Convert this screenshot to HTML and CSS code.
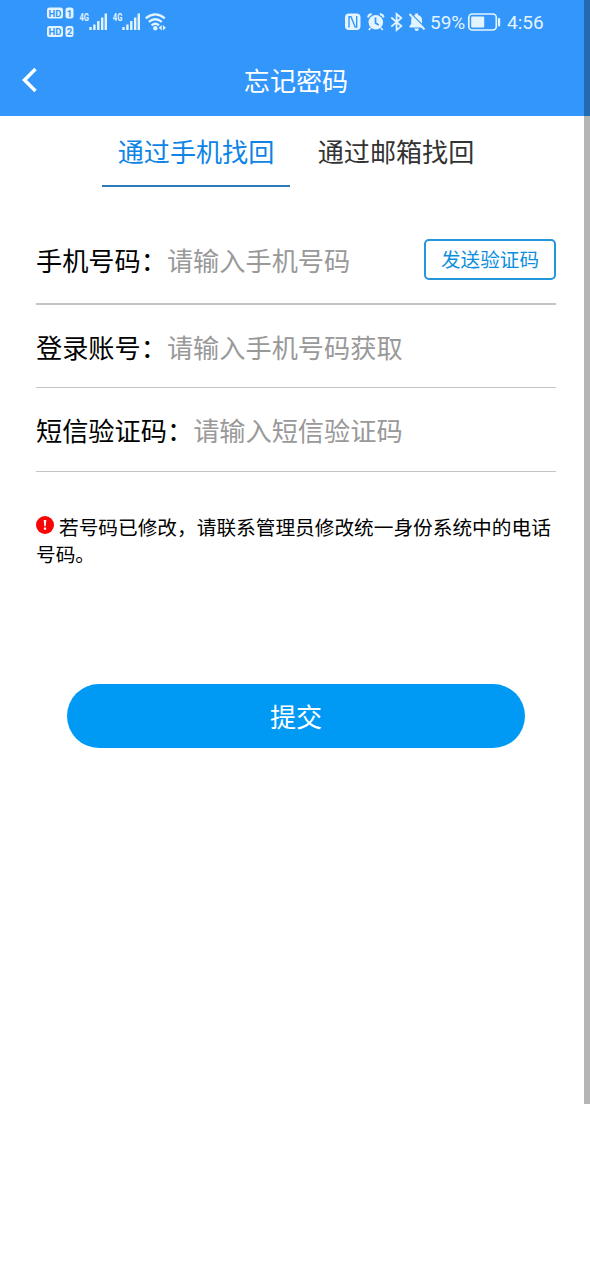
FILE: index.html
```html
<!DOCTYPE html>
<html lang="zh-CN">
<head>
<meta charset="utf-8">
<title>忘记密码</title>
<link rel="stylesheet" href="styles.css">
</head>
<body>
<div class="screen">
  <header class="header">
    <div class="status">
      <svg class="status-left" width="122" height="34" viewBox="46 5 122 34">
        <g fill="#e3f4ff">
          <rect x="47" y="7.500" width="16" height="11" rx="2.500"/>
          <rect x="65.500" y="7.500" width="8" height="11" rx="2.500"/>
          <rect x="47" y="26" width="16" height="11" rx="2.500"/>
          <rect x="65.500" y="26" width="8" height="11" rx="2.500"/>
          <path d="M89.300 27h2.400v3h-2.400zM93.200 24.500h2.400v5.500h-2.400zM97.100 21h2.400v9h-2.400zM101 17.500h2.400v12.500h-2.400zM104.600 13.500h2.400v16.500h-2.400z"/>
          <path d="M122.300 27h2.400v3h-2.400zM126.200 24.500h2.400v5.500h-2.400zM130.100 21h2.400v9h-2.400zM134 17.500h2.400v12.500h-2.400zM137.600 13.500h2.400v16.500h-2.400z"/>
          <circle cx="155.300" cy="28.300" r="2.200"/>
          <path d="M161.700 25v5.400l-3-2.700zM162.900 25v5.400l3-2.700z"/>
        </g>
        <g class="badge-text">
          <text x="55" y="16.500">HD</text><text x="69.500" y="16.500">1</text>
          <text x="55" y="35">HD</text><text x="69.500" y="35">2</text>
        </g>
        <g class="net-text"><text x="79.500" y="21" textLength="9.500" lengthAdjust="spacingAndGlyphs">4G</text><text x="112.800" y="21" textLength="9.500" lengthAdjust="spacingAndGlyphs">4G</text></g>
        <g fill="none" stroke="#e3f4ff" stroke-width="2.300">
          <path d="M145.800 18.300q9.500-7.800 19 0M148.800 21.900q6.500-5.200 13 0M151.600 25.300q3.700-3 7.400 0"/>
        </g>
      </svg>
      <svg class="status-right" width="84" height="22" viewBox="343 12 84 22">
        <rect x="345" y="13.500" width="15.500" height="16.500" rx="4" fill="#e3f4ff"/>
        <path d="M349 27.500V16.800h2l4.200 10.200h1.500V16" fill="none" stroke="#3396fb" stroke-width="1.400"/>
        <circle cx="375.800" cy="22.300" r="7.300" fill="#e3f4ff"/>
        <path d="M375.500 17.500v5.500l3.300 2" fill="none" stroke="#3396fb" stroke-width="1.700"/>
        <path d="M368 17.500q.5-3 3.700-3.500M383.600 17.500q-.5-3-3.700-3.500M370.500 28l-1.600 2M381 28l1.700 2" fill="none" stroke="#e3f4ff" stroke-width="1.800"/>
        <path d="M391.300 17.500l10 8.600-4.700 4V14l4.700 4-10 8.600" fill="none" stroke="#e3f4ff" stroke-width="1.800"/>
        <path d="M409.500 27.500v-1.500l1.700-2v-4q0-4 4-5v-1.500h2.800v1.500q4 1 4 5v4l1.900 2v1.500zM414.300 28.500h4.700q-.5 2.500-2.300 2.500t-2.400-2.500z" fill="#e3f4ff"/>
        <path d="M410.500 13l14.500 14.500" stroke="#3396fb" stroke-width="1.300"/>
        <path d="M409.500 14l15 15.500" stroke="#e3f4ff" stroke-width="1.800"/>
      </svg>
      <span class="percent">59%</span>
      <svg class="battery" width="34" height="20" viewBox="467 12 34 20">
        <rect x="468.800" y="14" width="27.500" height="16" rx="3.500" fill="none" stroke="#e3f4ff" stroke-width="1.700"/>
        <rect x="471.200" y="16.500" width="13" height="11" rx="1" fill="#e3f4ff"/>
        <rect x="498" y="18" width="2.200" height="8.500" rx="1" fill="#e3f4ff"/>
      </svg>
      <span class="time">4:56</span>
    </div>
    <div class="nav">
      <svg class="back" width="18" height="26" viewBox="0 0 18 26"><path d="M15.500 2L4.500 13 15.500 24" fill="none" stroke="#fff" stroke-width="3.500"/></svg>
      <h1 class="title">忘记密码</h1>
    </div>
  </header>
  <nav class="tabs">
    <a class="tab tab-active">通过手机找回</a>
    <a class="tab">通过邮箱找回</a>
  </nav>
  <main class="form">
    <div class="row row-phone"><span class="label">手机号码：</span><span class="hint">请输入手机号码</span><button class="send">发送验证码</button></div>
    <div class="row row-account"><span class="label">登录账号：</span><span class="hint">请输入手机号码获取</span></div>
    <div class="row row-code"><span class="label">短信验证码：</span><span class="hint">请输入短信验证码</span></div>
    <p class="note"><svg class="alert" width="18" height="18" viewBox="0 0 18 18"><circle cx="9" cy="9" r="9" fill="#f80505"/><path d="M7.700 4h2.600l-.6 6.300H8.300zM7.900 11.500h2.200v2.200H7.900z" fill="#fff"/></svg>若号码已修改，请联系管理员修改统一身份系统中的电话号码。</p>
    <button class="submit">提交</button>
  </main>
  <div class="scrollbar"></div>
</div>
</body>
</html>
```
FILE: styles.css
```css
* { box-sizing: border-box; }
body {
  margin: 0;
  background: #fff;
  font-family: "Noto Sans CJK SC", sans-serif;
  color: #000;
}
.screen { position: relative; height: 1278px; overflow: hidden; }
.header { height: 116px; background: #3396fb; }
.status {
  display: flex;
  align-items: flex-start;
  height: 45px;
  padding: 5px 0 0 46px;
  color: #e3f4ff;
}
.status svg { flex: none; display: block; }
.badge-text { font: bold 9.5px "Roboto", sans-serif; fill: #3396fb; text-anchor: middle; }
.net-text { font: bold 10px "Roboto", sans-serif; fill: #e3f4ff; }
.status-right { margin: 7px 0 0 175px; }
.percent, .time {
  flex: none;
  margin-top: 6px;
  font: 19px/24px "Roboto", sans-serif;
  white-space: nowrap;
}
.percent { width: 37px; margin-left: 3px; }
.battery { margin-top: 7px; }
.time { margin-left: 6px; }
.nav {
  display: grid;
  grid-template-columns: 60px 1fr 60px;
  align-items: center;
  height: 69px;
}
.back { margin-left: 20px; }
.title {
  margin: 0;
  padding-left: 2px;
  color: #fff;
  font-size: 26.1px;
  font-weight: 400;
  line-height: 38px;
  text-align: center;
}
.tabs { display: flex; gap: 12px; padding-left: 102px; }
.tab {
  width: 188px;
  height: 71px;
  padding-top: 16px;
  border-bottom: 2px solid transparent;
  color: #333;
  font-size: 26.1px;
  line-height: 38px;
  text-align: center;
}
.tab-active { color: #0d84e6; border-color: #2b7bb9; }
.form { padding: 0 34px 0 36px; }
.row {
  display: flex;
  align-items: center;
  border-bottom: 1px solid #c4c4c4;
  font-size: 26.2px;
  line-height: 38px;
}
.row-phone { height: 118px; padding-top: 30px; border-bottom-width: 2px; }
.row-account { height: 83px; padding-top: 2px; }
.row-code { height: 84px; padding-top: 1px; }
.hint { color: #999; }
.send {
  width: 132px;
  height: 41px;
  margin-left: auto;
  margin-top: -1px;
  padding: 0 0 1px;
  border: 2px solid #2496dc;
  border-radius: 5px;
  background: #fff;
  color: #0d8fe0;
  font: 19.6px/28px "Noto Sans CJK SC", sans-serif;
}
.note { margin: 42px 0 0; font-size: 19.68px; line-height: 26.5px; width: 520px; }
.alert { margin-right: 5px; vertical-align: 1px; }
.submit {
  display: block;
  width: 458px;
  height: 64px;
  margin: 117px 0 0 31px;
  padding: 0;
  border: 0;
  border-radius: 32px;
  background: #0099f3;
  color: #fff;
  font: 26.1px/38px "Noto Sans CJK SC", sans-serif;
}
/* Overlay scrollbar thumb */
.scrollbar {
  position: absolute;
  top: 0;
  right: 0;
  width: 6px;
  height: 1104px;
  background: rgba(0, 0, 0, .29);
}
```
